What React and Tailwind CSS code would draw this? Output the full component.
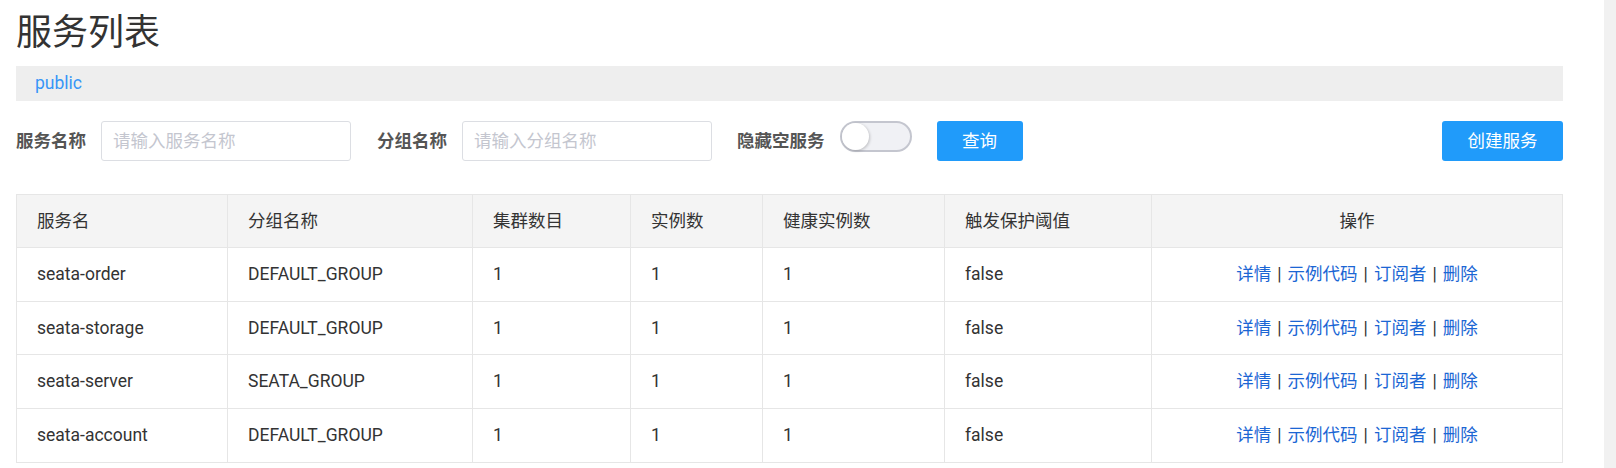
import React from 'react';

const rows = [
  { name: 'seata-order', group: 'DEFAULT_GROUP' },
  { name: 'seata-storage', group: 'DEFAULT_GROUP' },
  { name: 'seata-server', group: 'SEATA_GROUP' },
  { name: 'seata-account', group: 'DEFAULT_GROUP' },
];

const cols = 'grid grid-cols-[211px_245px_158px_132px_182px_207px_1fr]';
const cell = 'flex items-center px-5 border-r border-[#e6e6e6]';

const Actions = () => (
  <div className="flex items-center justify-center">
    <a className="text-[#1b66d4]">详情</a>
    <span className="mx-[6px] text-[#333]">|</span>
    <a className="text-[#1b66d4]">示例代码</a>
    <span className="mx-[6px] text-[#333]">|</span>
    <a className="text-[#1b66d4]">订阅者</a>
    <span className="mx-[6px] text-[#333]">|</span>
    <a className="text-[#1b66d4]">删除</a>
  </div>
);

const App = () => {
  return (
    <div
      className="flex w-[1616px] h-[468px] bg-white overflow-hidden text-[#333]"
      style={{ fontFamily: "Roboto, 'Noto Sans CJK SC', sans-serif" }}
    >
      <div className="w-[1604px] pl-[16px]">
        <div className="w-[1547px]">
          <h1 className="pt-[15px] text-[36px] leading-[36px] font-normal text-[#333]">服务列表</h1>

          {/* namespace bar */}
          <div className="mt-[15px] h-[35px] bg-[#eeeeee] flex items-center pl-[19px]">
            <span className="text-[17.5px] text-[#3796f7]">public</span>
          </div>

          {/* search row */}
          <div className="mt-[20px] h-[40px] flex items-center">
            <span className="text-[17.5px] font-bold text-[#555]">服务名称</span>
            <input
              className="ml-[15px] w-[250px] h-[40px] border border-[#dcdee3] rounded-[3px] px-[11px] text-[17.5px] placeholder-[#c4c6cf] outline-none"
              placeholder="请输入服务名称"
            />
            <span className="ml-[26px] text-[17.5px] font-bold text-[#555]">分组名称</span>
            <input
              className="ml-[15px] w-[250px] h-[40px] border border-[#dcdee3] rounded-[3px] px-[11px] text-[17.5px] placeholder-[#c4c6cf] outline-none"
              placeholder="请输入分组名称"
            />
            <span className="ml-[25px] text-[17.5px] font-bold text-[#555]">隐藏空服务</span>
            <div className="ml-[15px] self-start w-[72px] h-[31px] rounded-full border-2 border-[#c4c6cf] bg-[#f0f1f5] flex items-center">
              <div className="w-[27px] h-[27px] rounded-full bg-white shadow-[1px_1px_3px_rgba(0,0,0,0.2)]" />
            </div>
            <button className="ml-[25px] w-[86px] h-[40px] rounded-[3px] bg-[#209bfa] text-white text-[17.5px]">查询</button>
            <div className="flex-1" />
            <button className="w-[121px] h-[40px] rounded-[3px] bg-[#209bfa] text-white text-[17.5px]">创建服务</button>
          </div>

          {/* table */}
          <div className="mt-[33px] border border-[#e6e6e6] text-[17.5px]">
            <div className={`${cols} h-[53px] bg-[#f4f4f4] border-b border-[#e6e6e6]`}>
              <div className={cell}>服务名</div>
              <div className={cell}>分组名称</div>
              <div className={cell}>集群数目</div>
              <div className={cell}>实例数</div>
              <div className={cell}>健康实例数</div>
              <div className={cell}>触发保护阈值</div>
              <div className="flex items-center justify-center">操作</div>
            </div>
            {rows.map((r, i) => (
              <div
                key={r.name}
                className={`${cols} h-[53.6px] ${i < rows.length - 1 ? 'border-b border-[#e6e6e6]' : ''}`}
              >
                <div className={cell}>{r.name}</div>
                <div className={cell}>{r.group}</div>
                <div className={cell}>1</div>
                <div className={cell}>1</div>
                <div className={cell}>1</div>
                <div className={cell}>false</div>
                <Actions />
              </div>
            ))}
          </div>
        </div>
      </div>
      <div className="w-[12px] h-[468px] bg-[#f1f1f1]" />
    </div>
  );
};

export default App;
